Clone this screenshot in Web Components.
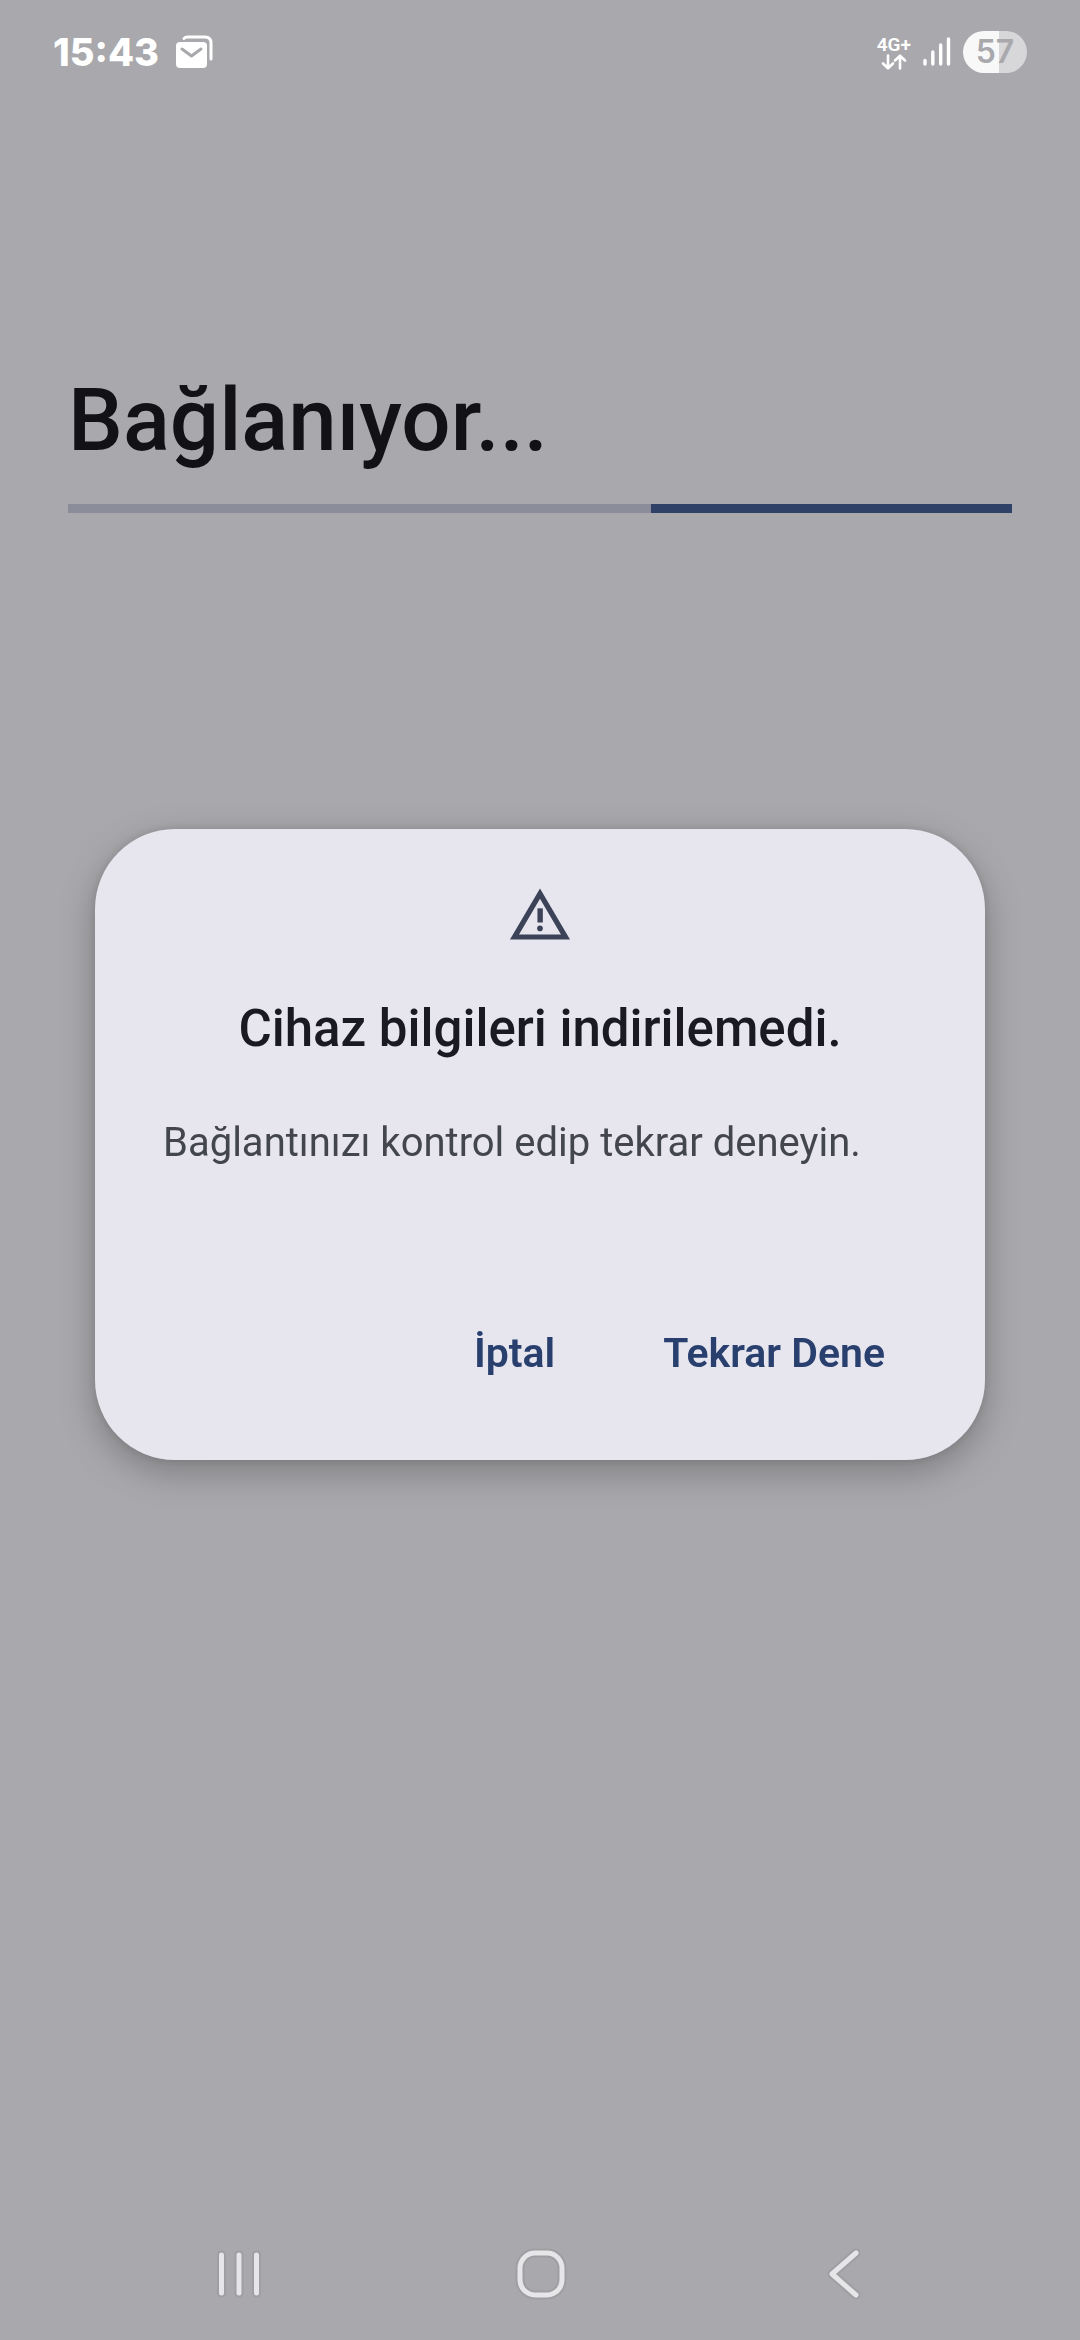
<!DOCTYPE html>
<html lang="tr">
<head>
<meta charset="utf-8">
<meta name="viewport" content="width=device-width, initial-scale=1">
<title>Bağlanıyor...</title>
<style>
  html, body { margin: 0; min-height: 100%; }
  body { background: #a9a8ac; font-family: Roboto, "Noto Sans", sans-serif; }
</style>
</head>
<body>
<setup-screen>
  <status-bar slot="top" time="15:43" network="4G+" battery="57"></status-bar>
  <connect-progress label="Bağlanıyor..."></connect-progress>
  <nav-bar slot="bottom"></nav-bar>
  <alert-dialog slot="overlay">
    <span slot="title">Cihaz bilgileri indirilemedi.</span>
    <span slot="message">Bağlantınızı kontrol edip tekrar deneyin.</span>
    <text-button slot="actions">İptal</text-button>
    <text-button slot="actions">Tekrar Dene</text-button>
  </alert-dialog>
</setup-screen>
<script>
  class BaseElement extends HTMLElement {
    constructor() {
      super();
      this.attachShadow({ mode: "open" }).innerHTML = this.constructor.markup;
    }
  }

  customElements.define("setup-screen", class extends BaseElement {
    static markup = `
      <style>
        :host { display: flex; flex-direction: column; min-height: 100vh; }
        main { flex: 1; padding: 0 68px; }
        .overlay { position: fixed; inset: 80px 0 132px; display: flex; align-items: center; padding: 0 95px; }
      </style>
      <slot name="top"></slot>
      <main><slot></slot></main>
      <slot name="bottom"></slot>
      <div class="overlay"><slot name="overlay"></slot></div>`;
  });

  customElements.define("status-bar", class extends BaseElement {
    static markup = `
      <style>
        :host { display: flex; align-items: center; justify-content: space-between; height: 104px; padding: 0 53px; color: #fff; }
        .group { display: flex; align-items: center; }
        .left { gap: 17px; }
        .right { gap: 12px; }
        .time { font: 800 38px/44px Inter, sans-serif; }
        .net { display: flex; flex-direction: column; align-items: center; }
        .type { font: 600 19px/19px Roboto, sans-serif; }
        .battery { display: flex; align-items: center; justify-content: center; width: 64px; height: 42px; border-radius: 21px;
          background: linear-gradient(to right, #f8f8f8 57%, #d7d7d9 57%); color: #a9a8ac; font: 600 32px/42px Inter, sans-serif; }
        svg { display: block; }
      </style>
      <div class="group left">
        <span class="time"></span>
        <svg width="38" height="34" viewBox="0 0 38 34" aria-hidden="true">
          <path d="M8 3.500Q9 2 12 2H29Q35 2 35 8V24" fill="none" stroke="#fff" stroke-width="3" stroke-linecap="round"/>
          <rect x="0" y="7" width="31" height="26" rx="4" fill="#fff"/>
          <path d="M6 14L15.500 21L25 14" fill="none" stroke="#a9a8ac" stroke-width="3" stroke-linecap="round" stroke-linejoin="round"/>
        </svg>
      </div>
      <div class="group right">
        <div class="net">
          <span class="type"></span>
          <svg width="26" height="16" viewBox="0 0 26 16" fill="none" stroke="#fff" stroke-width="2.600" stroke-linecap="round" stroke-linejoin="round" aria-hidden="true">
            <path d="M7 1.500V14M2 9.500L7 14.300L12 9.500M19 14.500V2M14 6.500L19 1.700L24 6.500"/>
          </svg>
        </div>
        <svg width="28" height="30" viewBox="0 0 28 30" fill="none" stroke="#fff" stroke-width="3.400" stroke-linecap="round" aria-hidden="true">
          <path d="M2 23.500V27M9.800 15V27M17.700 8V27M25.500 2V27"/>
        </svg>
        <span class="battery"></span>
      </div>`;
    connectedCallback() {
      const put = (sel, name) => { this.shadowRoot.querySelector(sel).textContent = this.getAttribute(name); };
      put(".time", "time");
      put(".type", "network");
      put(".battery", "battery");
    }
  });

  customElements.define("connect-progress", class extends BaseElement {
    static markup = `
      <style>
        :host { display: block; padding-top: 260px; }
        h1 { margin: 0 0 28px; font-size: 87px; line-height: 112px; font-weight: 500; color: #121116; }
        .track { display: flex; justify-content: flex-end; height: 9px; background: #8b8e9a; }
        .bar { width: 38.2%; background: #304168; }
      </style>
      <h1 id="label"></h1>
      <div class="track" role="progressbar" aria-labelledby="label"><div class="bar"></div></div>`;
    connectedCallback() {
      this.shadowRoot.querySelector("h1").textContent = this.getAttribute("label");
    }
  });

  customElements.define("alert-dialog", class extends BaseElement {
    static markup = `
      <style>
        :host { display: block; flex: 1; }
        section { display: flex; flex-direction: column; padding: 51px 68px 55px; border-radius: 80px; background: #e7e6ef;
          box-shadow: 0 12px 36px rgba(0,0,0,.26), 0 0 10px rgba(0,0,0,.12); }
        svg { display: block; align-self: center; }
        h2 { margin: 45px 0 0; text-align: center; font-size: 51px; line-height: 72px; font-weight: 500; color: #1a1b20; }
        p { margin: 50px 0 0; font-size: 40px; line-height: 56px; font-weight: 400; color: #44464f; }
        .actions { display: flex; justify-content: flex-end; gap: 44px; margin-top: 130px; }
      </style>
      <section role="alertdialog" aria-labelledby="t" aria-describedby="m">
        <svg width="68" height="68" viewBox="0 0 24 24" fill="#3c4358" aria-hidden="true">
          <path d="M1.400 21L12 3L22.600 21ZM4.600 19.200H19.400L12 6.600Z"/>
          <path d="M11.100 10h1.900v5h-1.900z"/><circle cx="12" cy="17.100" r="1"/>
        </svg>
        <h2 id="t"><slot name="title"></slot></h2>
        <p id="m"><slot name="message"></slot></p>
        <div class="actions"><slot name="actions"></slot></div>
      </section>`;
  });

  customElements.define("text-button", class extends BaseElement {
    static markup = `
      <style>
        :host { display: block; }
        button { border: 0; margin: 0; padding: 24px 32px; background: none; font: inherit; font-size: 41px; line-height: 56px;
          font-weight: 600; color: #29406f; cursor: pointer; }
      </style>
      <button type="button"><slot></slot></button>`;
  });

  customElements.define("nav-bar", class extends BaseElement {
    static markup = `
      <style>
        :host { display: flex; align-items: center; justify-content: space-between; height: 132px; padding: 0 204px; }
        button { display: block; border: 0; margin: 0; padding: 0; background: none; cursor: pointer; }
        svg { display: block; fill: none; stroke-linecap: round; stroke-linejoin: round; }
        .halo { stroke: #9f9ea2; stroke-width: 9; }
        .line { stroke: #e6e6e8; stroke-width: 5; }
      </style>
      <button type="button" aria-label="Son uygulamalar"><svg width="70" height="60" viewBox="0 0 70 60">
        <path class="halo" d="M17.500 11V49M35 11V49M52.500 11V49"/><path class="line" d="M17.500 11V49M35 11V49M52.500 11V49"/></svg></button>
      <button type="button" aria-label="Ana ekran"><svg width="70" height="60" viewBox="0 0 70 60">
        <rect class="halo" x="15" y="9" width="42" height="42" rx="15"/><rect class="line" x="15" y="9" width="42" height="42" rx="15"/></svg></button>
      <button type="button" aria-label="Geri"><svg width="70" height="60" viewBox="0 0 70 60">
        <path class="halo" d="M50 9L26 30L50 51"/><path class="line" d="M50 9L26 30L50 51"/></svg></button>`;
  });
</script>
</body>
</html>
